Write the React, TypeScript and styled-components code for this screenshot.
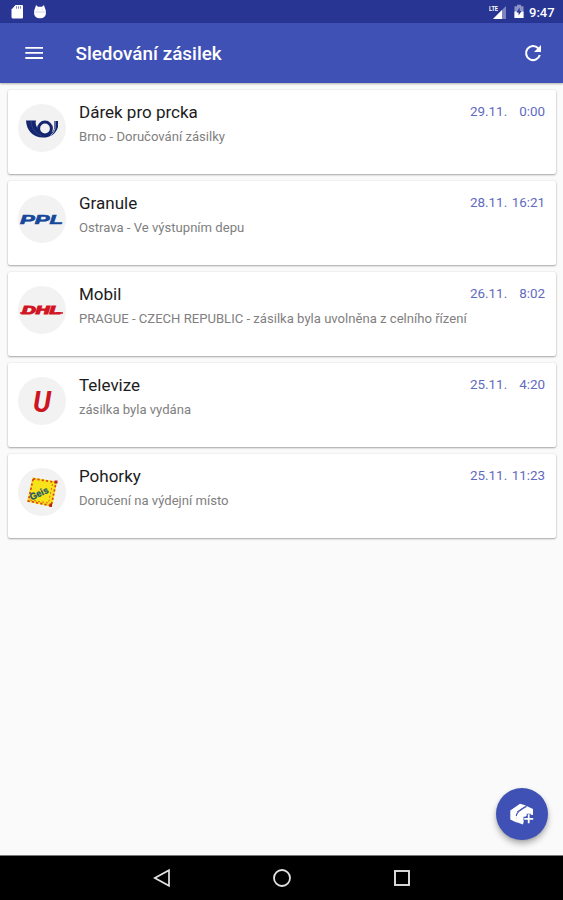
import React from "react";
import styled, { createGlobalStyle } from "styled-components";

const GlobalStyle = createGlobalStyle`
  * { box-sizing: border-box; }
  body { margin: 0; background: #fafafa; font-family: Roboto, sans-serif; }
`;

const Screen = styled.div`
  display: flex;
  flex-direction: column;
  width: 563px;
  height: 900px;
  overflow: hidden;
  background: #fafafa;
`;

const StatusBar = styled.div`
  display: flex;
  align-items: center;
  justify-content: space-between;
  height: 23px;
  flex: none;
  padding: 0 8px 0 10px;
  background: #283593;
  color: #fff;
`;

const StatusGroup = styled.div<{ $gap: number }>`
  display: flex;
  align-items: center;
  gap: ${(p) => p.$gap}px;
`;

const Clock = styled.span`
  font-size: 13px;
  font-weight: 500;
  line-height: 23px;
  padding-top: 2px;
  width: 26px;
  white-space: nowrap;
`;

const AppBar = styled.header`
  display: flex;
  align-items: center;
  height: 60px;
  flex: none;
  padding: 0 20px 0 24px;
  background: #3f51b5;
  color: #fff;
  box-shadow: 0 1px 2px rgba(0, 0, 0, 0.3);
`;

const Title = styled.h1`
  flex: 1;
  margin: 0 0 0 31.5px;
  padding-top: 2px;
  font-size: 18.9px;
  font-weight: 500;
  line-height: 24px;
`;

const IconButton = styled.button`
  display: flex;
  padding: 0;
  border: 0;
  background: none;
  color: inherit;
`;

const Content = styled.main`
  position: relative;
  flex: 1;
`;

const List = styled.ul`
  display: flex;
  flex-direction: column;
  gap: 7px;
  margin: 0;
  padding: 7px 7px 0 8px;
  list-style: none;
`;

const Card = styled.li`
  display: flex;
  align-items: flex-start;
  height: 84px;
  padding: 14px 11px 0 10px;
  border-radius: 2px;
  background: #fff;
  box-shadow: 0 1px 2px rgba(0, 0, 0, 0.32), 0 0 2px rgba(0, 0, 0, 0.1);
`;

const Avatar = styled.div`
  display: flex;
  width: 48px;
  height: 48px;
  flex: none;
  border-radius: 50%;
  background: #f2f2f2;
`;

const Details = styled.div`
  flex: 1;
  padding-left: 13px;
`;

const Name = styled.div`
  margin-top: -3px;
  font-size: 17px;
  line-height: 22px;
  color: #1c1c1c;
  white-space: nowrap;
`;

const State = styled.div`
  margin-top: 5px;
  font-size: 13.1px;
  line-height: 18px;
  color: #808080;
  white-space: nowrap;
`;

const Time = styled.time`
  display: flex;
  justify-content: space-between;
  width: 75px;
  font-size: 13.4px;
  line-height: 16px;
  color: #5f6bc0;
`;

const Fab = styled.button`
  position: absolute;
  right: 15px;
  bottom: 15px;
  display: flex;
  align-items: center;
  justify-content: center;
  width: 52px;
  height: 52px;
  padding: 0;
  border: 0;
  border-radius: 50%;
  background: #3f51b5;
  box-shadow: 0 4px 6px rgba(0, 0, 0, 0.28), 0 1px 3px rgba(0, 0, 0, 0.12);
`;

const NavBar = styled.nav`
  display: flex;
  align-items: center;
  justify-content: center;
  gap: 100px;
  height: 45px;
  flex: none;
  border-top: 1px solid #777;
  background: #000;
`;

const PostLogo = () => (
  <svg width="48" height="48" viewBox="0 0 48 48">
    <path d="M8 16.5H18C17 19 18 22 20 25L23 31L34.5 28L36 25V17H40V23C38 30 32 33.6 25 33.6C15 33.6 8.5 26.5 8 16.5Z" fill="#14266f" />
    <path d="M13 17C13 24 18 30 24 32" fill="none" stroke="#6070a4" strokeWidth=".4" />
    <circle cx="27" cy="24.5" r="6.4" fill="#f2f2f2" stroke="#14266f" strokeWidth="3" />
    <path d="M37 17V24.5Q36 29 32.5 31.5" fill="none" stroke="#d8dbe7" strokeWidth=".8" />
  </svg>
);

const PplLogo = () => (
  <svg width="48" height="48" viewBox="0 0 48 48">
    <text x="2" y="28.6" textLength="43" lengthAdjust="spacingAndGlyphs" fontFamily="Liberation Sans, sans-serif" fontSize="12.3" fontWeight="700" fontStyle="italic" fill="#15479b" stroke="#15479b" strokeWidth=".6">PPL</text>
  </svg>
);

const DhlLogo = () => (
  <svg width="48" height="48" viewBox="0 0 48 48">
    <text x="4" y="27.8" textLength="39" lengthAdjust="spacingAndGlyphs" fontFamily="Liberation Sans, sans-serif" fontSize="10.5" fontWeight="700" fontStyle="italic" fill="#d21524" stroke="#d21524" strokeWidth="1.1">DHL</text>
    <path d="M2 27H8M38 27H45" stroke="#d21524" strokeWidth="1.5" />
  </svg>
);

const UlozenkaLogo = () => (
  <svg width="48" height="48" viewBox="0 0 48 48">
    <text x="15" y="34.5" textLength="18" lengthAdjust="spacingAndGlyphs" fontFamily="Roboto, sans-serif" fontSize="29" fontWeight="700" fontStyle="italic" fill="#cc1422">U</text>
  </svg>
);

const GeisLogo = () => (
  <svg width="48" height="48" viewBox="0 0 48 48">
    <path d="M14.5 9.5L39 13.5L34 39L9 33.5Z" fill="#f8e21a" />
    <path d="M15.2 10.6L38 14.5L33.3 37.7L10.3 33Z" fill="none" stroke="#d5441f" strokeWidth="1.7" strokeDasharray="2.2 2.1" />
    <path d="M34.5 16L30.5 35L12 32" fill="none" stroke="#e56a20" strokeWidth="1" strokeDasharray="2 2" />
    <path d="M36.5 12.5H39.5V15.5H36.5ZM31.5 35.5H34V39H31.5Z" fill="#ba2320" />
    <text x="13.5" y="32.5" transform="rotate(-25 13.5 32.5)" textLength="19.5" lengthAdjust="spacingAndGlyphs" fontFamily="Liberation Sans, sans-serif" fontSize="9.5" fontWeight="700" fill="#17566b" stroke="#17566b" strokeWidth=".3">Geis</text>
  </svg>
);

const parcels = [
  { name: "Dárek pro prcka", state: "Brno - Doručování zásilky", date: "29.11.", time: "0:00", Logo: PostLogo },
  { name: "Granule", state: "Ostrava - Ve výstupním depu", date: "28.11.", time: "16:21", Logo: PplLogo },
  { name: "Mobil", state: "PRAGUE - CZECH REPUBLIC - zásilka byla uvolněna z celního řízení", date: "26.11.", time: "8:02", Logo: DhlLogo },
  { name: "Televize", state: "zásilka byla vydána", date: "25.11.", time: "4:20", Logo: UlozenkaLogo },
  { name: "Pohorky", state: "Doručení na výdejní místo", date: "25.11.", time: "11:23", Logo: GeisLogo },
];

const SdCardIcon = () => (
  <svg width="14" height="16" viewBox="0 0 14 16">
    <path d="M5.5 1H12Q13 1 13 2V13Q13 14.5 12 14.5H3Q1.5 14.5 1.5 13V5.5Z" fill="#fff" />
    <path d="M6.5 2.2V4.7M8.5 2.2V4.7M10.5 2.2V4.7" stroke="#7d86bd" />
  </svg>
);

const DebugIcon = () => (
  <svg width="14" height="16" viewBox="0 0 14 16">
    <path d="M3 1L5 2.7H9L11 1L11.7 3.5Q13 6 13 8.5Q13 14.3 7 14.3Q1 14.3 1 8.5Q1 6 2.3 3.5Z" fill="#fff" />
    <path d="M4.2 5.2H5.5M8.5 5.2H9.8M1.5 8H12.5" stroke="#c3c8e6" strokeWidth=".8" />
  </svg>
);

const SignalIcon = () => (
  <svg width="18" height="17" viewBox="0 0 18 17">
    <path d="M17 3V16H4Z" fill="#7c85be" />
    <path d="M13 7V16H4Z" fill="#fff" />
    <text x="0" y="7.8" textLength="9" lengthAdjust="spacingAndGlyphs" fontFamily="Roboto, sans-serif" fontSize="8" fontWeight="700" fill="#fff">LTE</text>
  </svg>
);

const BatteryIcon = () => (
  <svg width="10" height="15" viewBox="0 0 10 15">
    <path d="M3 .8H7V2.2H9.5V14H.5V2.2H3Z" fill="#8c94c7" />
    <path d="M.5 7.5H9.5V14H.5Z" fill="#fff" />
    <path d="M5.6 3.4L2.5 8.4H4.6V11.5L7.6 6.9H5.6Z" fill="#283593" />
  </svg>
);

export default function App() {
  return (
    <Screen>
      <GlobalStyle />
      <StatusBar>
        <StatusGroup $gap={9}>
          <SdCardIcon />
          <DebugIcon />
        </StatusGroup>
        <StatusGroup $gap={5}>
          <StatusGroup $gap={7}>
            <SignalIcon />
            <BatteryIcon />
          </StatusGroup>
          <Clock>9:47</Clock>
        </StatusGroup>
      </StatusBar>
      <AppBar>
        <IconButton aria-label="Menu">
          <svg width="20" height="20" viewBox="0 0 20 20">
            <path d="M1.3 4.8H19M1.3 9.9H19M1.3 15H19" stroke="#fff" strokeWidth="1.8" />
          </svg>
        </IconButton>
        <Title>Sledování zásilek</Title>
        <IconButton aria-label="Obnovit">
          <svg width="20" height="20" viewBox="0 0 20 20">
            <path d="M15.2 5.3A7 7 0 1 0 16.8 12" fill="none" stroke="#fff" strokeWidth="2.1" />
            <path d="M18 2V9H11Z" fill="#fff" />
          </svg>
        </IconButton>
      </AppBar>
      <Content>
        <List>
          {parcels.map(({ name, state, date, time, Logo }) => (
            <Card key={name}>
              <Avatar><Logo /></Avatar>
              <Details>
                <Name>{name}</Name>
                <State>{state}</State>
              </Details>
              <Time><span>{date}</span><span>{time}</span></Time>
            </Card>
          ))}
        </List>
        <Fab aria-label="Přidat zásilku">
          <svg width="28" height="28" viewBox="0 0 28 28">
            <path d="M2.3 10.5L12 3.8L18 5.5L9 11.5L8.5 22.5L2.3 19.5Z" fill="#fff" />
            <path d="M8.7 12.5L18.5 6L25 9V15Q17 14 16 20L15 24.5L8 22Z" fill="#fff" />
            <path d="M8.3 16Q8.5 11.5 18.5 6.5" fill="none" stroke="#3f51b5" strokeWidth="1.1" />
            <path d="M20.7 13.7V24M15.5 18.8H26" stroke="#3f51b5" strokeWidth="4" />
            <path d="M20.7 14.3V23.3M16.2 18.8H25.2" stroke="#fff" strokeWidth="1.8" />
          </svg>
        </Fab>
      </Content>
      <NavBar>
        <svg width="20" height="20" viewBox="0 0 20 20"><path d="M17 2.3V17.7L2.8 10Z" fill="none" stroke="#e2e2e2" strokeWidth="1.7" /></svg>
        <svg width="20" height="20" viewBox="0 0 20 20"><circle cx="10" cy="10" r="8" fill="none" stroke="#e2e2e2" strokeWidth="1.8" /></svg>
        <svg width="20" height="20" viewBox="0 0 20 20"><rect x="3" y="3" width="14" height="14" fill="none" stroke="#e2e2e2" strokeWidth="1.9" /></svg>
      </NavBar>
    </Screen>
  );
}
